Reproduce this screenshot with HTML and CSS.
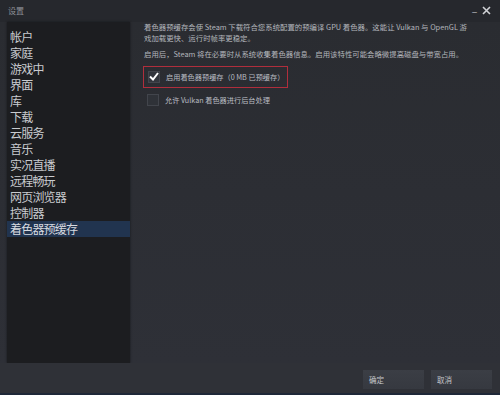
FILE: index.html
```html
<!DOCTYPE html>
<html lang="zh-CN">
<head>
<meta charset="utf-8">
<title>设置</title>
<link rel="stylesheet" href="styles.css">
</head>
<body>
<div class="window">
  <div class="titlebar">
    <span class="title">设置</span>
    <div class="controls">
      <span class="min">_</span>
      <svg class="close" width="9" height="9" viewBox="0 0 9 9"><path d="M1 1 L8 8 M8 1 L1 8" stroke="#d0d2d6" stroke-width="1.6"/></svg>
    </div>
  </div>
  <div class="main">
    <nav class="sidebar">
      <div class="item">帐户</div>
      <div class="item">家庭</div>
      <div class="item">游戏中</div>
      <div class="item">界面</div>
      <div class="item">库</div>
      <div class="item">下载</div>
      <div class="item">云服务</div>
      <div class="item">音乐</div>
      <div class="item">实况直播</div>
      <div class="item">远程畅玩</div>
      <div class="item">网页浏览器</div>
      <div class="item">控制器</div>
      <div class="item active">着色器预缓存</div>
    </nav>
    <section class="content">
      <p class="para">着色器预缓存会使 Steam 下载符合您系统配置的预编译 GPU 着色器。这能让 Vulkan 与 OpenGL 游<br>戏加载更快、运行时帧率更稳定。</p>
      <p class="para">启用后，Steam 将在必要时从系统收集着色器信息。启用该特性可能会略微提高磁盘与带宽占用。</p>
      <div class="option highlighted">
        <span class="box checked">
          <svg width="10" height="9" viewBox="0 0 10 9"><path d="M1 4.5 L4 7.5 L9 1" fill="none" stroke="#ffffff" stroke-width="2"/></svg>
        </span>
        <span class="label">启用着色器预缓存（0 MB 已预缓存）</span>
      </div>
      <div class="option">
        <span class="box"></span>
        <span class="label">允许 Vulkan 着色器进行后台处理</span>
      </div>
    </section>
  </div>
  <div class="footer">
    <button class="btn">确定</button>
    <button class="btn">取消</button>
  </div>
</div>
</body>
</html>
```
FILE: styles.css
```css
* { box-sizing: border-box; }
html, body {
  margin: 0;
  padding: 0;
  background: #2b2d33;
}
body {
  font-family: "Noto Sans CJK SC", "Noto Sans", sans-serif;
  color: #c6c8cc;
}
.window {
  width: 500px;
  height: 395px;
  display: flex;
  flex-direction: column;
  background: #2b2d33;
  border-bottom: 2px solid #1f2838;
}
.titlebar {
  height: 22px;
  display: flex;
  align-items: center;
  justify-content: space-between;
  padding: 0 9px 2px 8px;
  background: #26282d;
}
.title {
  font-size: 8px;
  color: #8e9198;
}
.controls {
  display: flex;
  align-items: center;
  gap: 5px;
}
.min {
  font-size: 9px;
  color: #d0d2d6;
  line-height: 1;
  margin-top: -4px;
}
.main {
  flex: 1;
  display: flex;
  min-height: 0;
  background: linear-gradient(#2a2c31, #2e3037);
}
.sidebar {
  width: 123px;
  margin-left: 7px;
  background: #1c1d20;
  padding-top: 7px;
  box-shadow: 0 0 2px #15161a;
}
.item {
  height: 16px;
  line-height: 16px;
  font-size: 12px;
  letter-spacing: -0.8px;
  padding-left: 3px;
  color: #c9cbcf;
  white-space: nowrap;
}
.item.active {
  background: #21344f;
  color: #d7dae0;
}
.content {
  flex: 1;
  padding: 0 8px 0 14px;
}
.para {
  margin: 0 0 6px;
  font-size: 7.4px;
  line-height: 10.5px;
  color: #b3b6bc;
  white-space: nowrap;
}
.option {
  display: flex;
  align-items: center;
  gap: 6px;
  height: 22px;
  padding-left: 4px;
  width: 145px;
  margin-left: -1px;
}
.option.highlighted {
  border: 1px solid #b02e3c;
  margin-bottom: 1px;
}
.box {
  width: 12px;
  height: 12px;
  background: #2f3238;
  border: 1px solid #42454c;
  display: flex;
  align-items: center;
  justify-content: center;
}
.box.checked {
  background: #33363d;
}
.label {
  font-size: 7.2px;
  color: #b9bcc2;
  white-space: nowrap;
}
.footer {
  height: 30px;
  display: flex;
  justify-content: flex-end;
  align-items: flex-start;
  gap: 7px;
  padding: 7px 8px 0 0;
  background: #2f3137;
}
.btn {
  width: 61px;
  height: 19px;
  border: none;
  background: linear-gradient(#3b3e45, #363940);
  color: #c4c6ca;
  font-family: "Noto Sans CJK SC", sans-serif;
  font-size: 7.5px;
  text-align: left;
  padding: 0 0 0 6px;
}
```
